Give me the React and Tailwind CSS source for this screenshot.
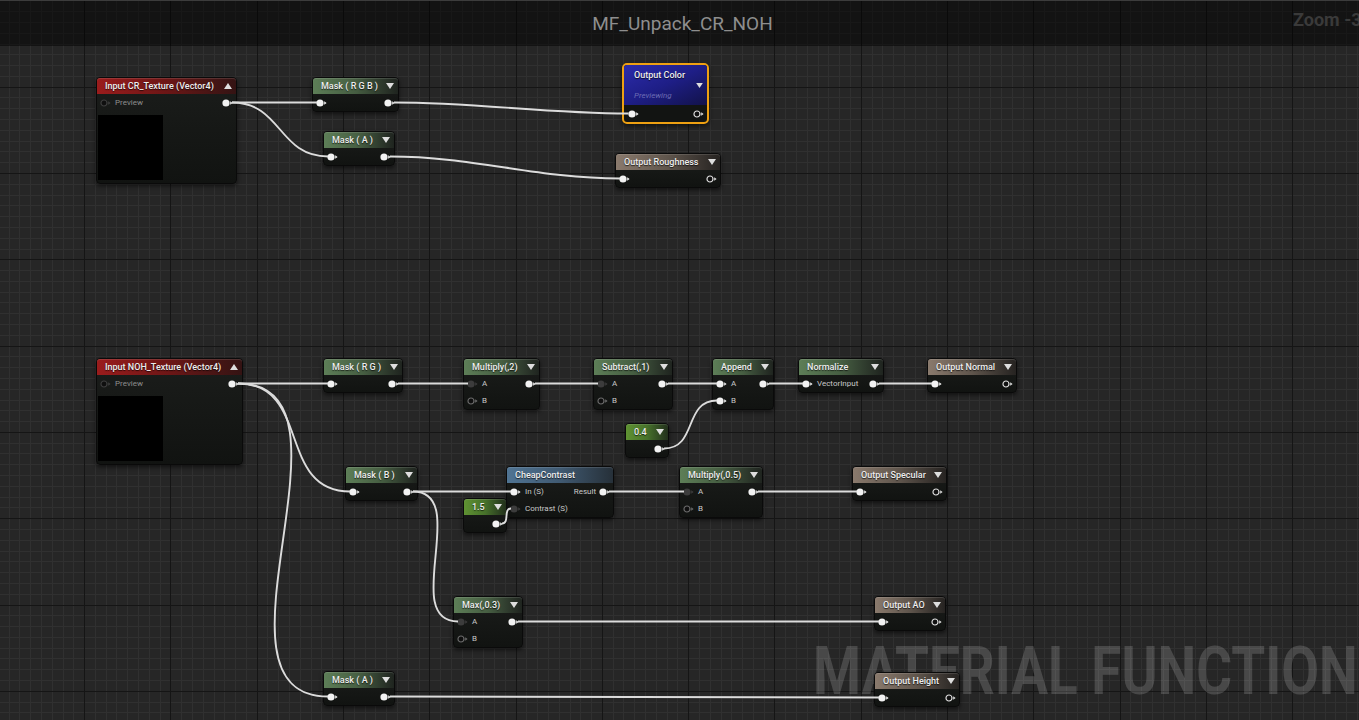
import React from "react";

// graph nodes: numeric x/y/w feed the wire math, pos holds the same values as classes
const NODES = {
  cr: { x: 96, y: 77, w: 141, pos: "left-[96px] top-[77px] w-[141px]", head: "red", title: "Input CR_Texture (Vector4)", tri: "up", preview: true, rows: [{ l: "p", lt: "Preview", r: "w" }] },
  mRGB: { x: 312, y: 77, w: 87, pos: "left-[312px] top-[77px] w-[87px]", head: "green", title: "Mask ( R G B )", rows: [{ l: "w", r: "w" }] },
  mA1: { x: 323, y: 131, w: 72, pos: "left-[323px] top-[131px] w-[72px]", head: "green", title: "Mask ( A )", rows: [{ l: "w", r: "w" }] },
  oR: { x: 615, y: 153, w: 106, pos: "left-[615px] top-[153px] w-[106px]", head: "out", title: "Output Roughness", rows: [{ l: "w", r: "o" }] },
  noh: { x: 96, y: 358, w: 147, pos: "left-[96px] top-[358px] w-[147px]", head: "red", title: "Input NOH_Texture (Vector4)", tri: "up", preview: true, rows: [{ l: "p", lt: "Preview", r: "w" }] },
  mRG: { x: 323, y: 358, w: 80, pos: "left-[323px] top-[358px] w-[80px]", head: "green", title: "Mask ( R G )", rows: [{ l: "w", r: "w" }] },
  mul2: { x: 463, y: 358, w: 77, pos: "left-[463px] top-[358px] w-[77px]", head: "green", title: "Multiply(,2)", rows: [{ l: "g", lt: "A", r: "w" }, { l: "h", lt: "B" }] },
  sub: { x: 593, y: 358, w: 80, pos: "left-[593px] top-[358px] w-[80px]", head: "green", title: "Subtract(,1)", rows: [{ l: "g", lt: "A", r: "w" }, { l: "h", lt: "B" }] },
  app: { x: 712, y: 358, w: 62, pos: "left-[712px] top-[358px] w-[62px]", head: "green", title: "Append", rows: [{ l: "w", lt: "A", r: "w" }, { l: "w", lt: "B" }] },
  c04: { x: 625, y: 423, w: 44, pos: "left-[625px] top-[423px] w-[44px]", head: "const", title: "0.4", rows: [{ r: "w" }] },
  norm: { x: 798, y: 358, w: 86, pos: "left-[798px] top-[358px] w-[86px]", head: "green", title: "Normalize", rows: [{ l: "w", lt: "VectorInput", r: "w" }] },
  oN: { x: 927, y: 358, w: 90, pos: "left-[927px] top-[358px] w-[90px]", head: "out", title: "Output Normal", rows: [{ l: "w", r: "o" }] },
  mB: { x: 345, y: 466, w: 73, pos: "left-[345px] top-[466px] w-[73px]", head: "green", title: "Mask ( B )", rows: [{ l: "w", r: "w" }] },
  cc: { x: 506, y: 466, w: 108, pos: "left-[506px] top-[466px] w-[108px]", head: "blue", title: "CheapContrast", tri: "none", rows: [{ l: "w", lt: "In (S)", rt: "Result", r: "w" }, { l: "g", lt: "Contrast (S)" }] },
  c15: { x: 463, y: 498, w: 44, pos: "left-[463px] top-[498px] w-[44px]", head: "const", title: "1.5", rows: [{ r: "w" }] },
  mul5: { x: 679, y: 466, w: 84, pos: "left-[679px] top-[466px] w-[84px]", head: "green", title: "Multiply(,0.5)", rows: [{ l: "g", lt: "A", r: "w" }, { l: "h", lt: "B" }] },
  oS: { x: 852, y: 466, w: 95, pos: "left-[852px] top-[466px] w-[95px]", head: "out", title: "Output Specular", rows: [{ l: "w", r: "o" }] },
  max: { x: 453, y: 596, w: 70, pos: "left-[453px] top-[596px] w-[70px]", head: "green", title: "Max(,0.3)", rows: [{ l: "g", lt: "A", r: "w" }, { l: "h", lt: "B" }] },
  oAO: { x: 874, y: 596, w: 72, pos: "left-[874px] top-[596px] w-[72px]", head: "out", title: "Output AO", rows: [{ l: "w", r: "o" }] },
  mA2: { x: 323, y: 671, w: 72, pos: "left-[323px] top-[671px] w-[72px]", head: "green", title: "Mask ( A )", rows: [{ l: "w", r: "w" }] },
  oH: { x: 874, y: 672, w: 86, pos: "left-[874px] top-[672px] w-[86px]", head: "out", title: "Output Height", rows: [{ l: "w", r: "o" }] },
};

const HEADS = {
  red: "bg-linear-to-r from-[#9a1c1c] via-[#6c1616] to-[#341313]",
  green: "bg-linear-to-r from-[#5d7e57] via-[#465e42] to-[#1f241f]",
  const: "bg-linear-to-r from-[#5f9232] via-[#47722b] to-[#22301b]",
  out: "bg-linear-to-r from-[#8a7a6d] via-[#5f554c] to-[#262321]",
  blue: "bg-linear-to-r from-[#507493] via-[#405a72] to-[#263039]",
};

const PINS = {
  w: { fill: "#f2f2f2", stroke: "none", tri: "#f2f2f2" },
  g: { fill: "#3c3c3c", stroke: "none", tri: "#3c3c3c" },
  h: { fill: "#0f0f0f", stroke: "#6a6a6a", tri: "#6a6a6a" },
  o: { fill: "#111111", stroke: "#dedede", tri: "#dedede" },
  p: { fill: "#0f0f0f", stroke: "#3e3e3e", tri: "#3e3e3e" },
};

const WIRES = [
  ["cr", 0, "mRGB", 0],
  ["cr", 0, "mA1", 0],
  ["mA1", 0, "oR", 0],
  ["noh", 0, "mRG", 0],
  ["noh", 0, "mB", 0],
  ["noh", 0, "mA2", 0],
  ["mRG", 0, "mul2", 0],
  ["mul2", 0, "sub", 0],
  ["sub", 0, "app", 0],
  ["c04", 0, "app", 1],
  ["app", 0, "norm", 0],
  ["norm", 0, "oN", 0],
  ["mB", 0, "cc", 0],
  ["mB", 0, "max", 0],
  ["c15", 0, "cc", 1],
  ["cc", 0, "mul5", 0],
  ["mul5", 0, "oS", 0],
  ["max", 0, "oAO", 0],
  ["mA2", 0, "oH", 0],
];

const rowY = (n, r) => n.y + 25.5 + 17 * r;

function Pin({ t }) {
  const p = PINS[t];
  const filled = t === "w" || t === "g";
  return (
    <svg width="11" height="8" viewBox="0 0 11 8" className="shrink-0">
      <circle cx="4" cy="4" r={filled ? 3.6 : 3} fill={p.fill} stroke={p.stroke} strokeWidth="1.2" />
      <path d="M8.2 2.3 L10.6 4 L8.2 5.7 Z" fill={p.tri} />
    </svg>
  );
}

function Tri({ up }) {
  return (
    <svg width="8" height="6" viewBox="0 0 8 6" className="shrink-0">
      <polygon points={up ? "0,6 8,6 4,0" : "0,0 8,0 4,6"} fill="#dedede" />
    </svg>
  );
}

function Node({ n }) {
  return (
    <div className={`absolute ${n.pos} rounded-[4px] border border-[#0a0a0a] bg-linear-to-b from-[#1b1d1b] to-[#111311] shadow-[0_2px_4px_rgba(0,0,0,0.55)]`}>
      <div className={`flex h-[16px] items-center justify-between rounded-t-[3px] pl-[8px] pr-[4px] shadow-[inset_0_1px_0_rgba(255,255,255,0.12)] ${HEADS[n.head]}`}>
        <span className="whitespace-nowrap text-[9px] leading-none font-medium text-[#ededed] [text-shadow:0_1px_1px_rgba(0,0,0,0.7)]">
          {n.title}
        </span>
        {n.tri !== "none" && <Tri up={n.tri === "up"} />}
      </div>
      {n.rows.map((r, i) => (
        <div key={i} className="flex h-[17px] items-center justify-between px-[3px]">
          <div className="flex items-center gap-[4px]">
            {r.l && <Pin t={r.l} />}
            {r.lt && (
              <span className={`whitespace-nowrap text-[8px] leading-none ${r.l === "p" ? "text-[#8e8e8e]" : "text-[#c8c8c8]"}`}>{r.lt}</span>
            )}
          </div>
          <div className="flex items-center gap-[3px]">
            {r.rt && <span className="whitespace-nowrap text-[8px] leading-none text-[#c8c8c8]">{r.rt}</span>}
            {r.r && <Pin t={r.r} />}
          </div>
        </div>
      ))}
      {n.preview && <div className="mb-[3px] ml-px mt-[4px] h-[65px] w-[65px] bg-black" />}
    </div>
  );
}

function OutputColor() {
  return (
    <div className="absolute left-[622px] top-[63px] w-[87px] rounded-[5px] border-2 border-[#eea012] bg-[#121412] shadow-[0_2px_4px_rgba(0,0,0,0.55)]">
      <div className="h-[40px] rounded-t-[3px] bg-linear-to-br from-[#2c2cab] via-[#1e1e86] to-[#12124a] pl-[10px] pt-[6px]">
        <span className="block whitespace-nowrap text-[9px] leading-none font-medium text-[#ededed] [text-shadow:0_1px_1px_rgba(0,0,0,0.7)]">
          Output Color
        </span>
        <div className="flex justify-end pr-[4px] pt-[3px]">
          <svg width="7" height="5" viewBox="0 0 8 6" className="shrink-0">
            <polygon points="0,0 8,0 4,6" fill="#dedede" />
          </svg>
        </div>
        <span className="mt-[4px] block text-[8px] italic leading-none text-[#6c6cb4]">Previewing</span>
      </div>
      <div className="flex h-[17px] items-center justify-between pl-[4px] pr-[3px]">
        <Pin t="w" />
        <Pin t="o" />
      </div>
    </div>
  );
}

function Grid() {
  const step = 10.7875;
  const lines = [];
  for (let k = 0; k < 130; k++) {
    const x = Math.round(-2.2 + k * step) + 0.5;
    if (x > 1359) break;
    lines.push({ k: "v" + k, x1: x, y1: 0, x2: x, y2: 720, major: k % 8 === 0 });
  }
  for (let k = 0; k < 70; k++) {
    const y = Math.round(0.4 + k * step) + 0.5;
    if (y > 720) break;
    lines.push({ k: "h" + k, x1: 0, y1: y, x2: 1359, y2: y, major: k % 8 === 0 });
  }
  const minor = lines.filter((l) => !l.major);
  const major = lines.filter((l) => l.major);
  return (
    <svg className="absolute inset-0" width="1359" height="720">
      {minor.map((l) => (
        <line key={l.k} x1={l.x1} y1={l.y1} x2={l.x2} y2={l.y2} stroke="#303030" strokeWidth="1" />
      ))}
      {major.map((l) => (
        <line key={l.k} x1={l.x1} y1={l.y1} x2={l.x2} y2={l.y2} stroke="#151515" strokeWidth="1" />
      ))}
    </svg>
  );
}

function wirePath(x1, y1, x2, y2) {
  const c = (Math.abs(x2 - x1) + Math.abs(y2 - y1)) / 3;
  return `M${x1} ${y1} C${x1 + c} ${y1} ${x2 - c} ${y2} ${x2} ${y2}`;
}

function Wires() {
  const paths = WIRES.map(([a, ra, b, rb]) => {
    const s = NODES[a];
    const e = NODES[b];
    return wirePath(s.x + s.w - 5, rowY(s, ra), e.x + 5, rowY(e, rb));
  });
  // Mask RGB feeds the selected Output Color node, which has a taller header
  const m = NODES.mRGB;
  paths.push(wirePath(m.x + m.w - 5, rowY(m, 0), 628.5, 113.5));
  return (
    <svg className="pointer-events-none absolute inset-0" width="1359" height="720">
      {paths.map((d, i) => (
        <path key={i} d={d} fill="none" stroke="#dcdcdc" strokeWidth="1.9" />
      ))}
    </svg>
  );
}

export default function App() {
  return (
    <div className="relative h-[720px] w-[1359px] overflow-hidden bg-[#262626] font-[family-name:Roboto,sans-serif]">
      <Grid />

      <div className="absolute left-[813px] top-[639px] origin-left scale-x-[0.83] whitespace-nowrap text-[66px] font-bold leading-none text-white/[0.16]">
        MATERIAL FUNCTION
      </div>

      {Object.entries(NODES).map(([k, n]) => (
        <Node key={k} n={n} />
      ))}
      <OutputColor />
      <Wires />

      <div className="absolute inset-x-0 top-0 flex h-[46px] items-center justify-center border-t border-[#3c3c3c] bg-black/50 pl-[6px]">
        <span className="text-[19px] leading-none text-[#8e8e8e]">MF_Unpack_CR_NOH</span>
        <span className="absolute left-[1293px] top-[10px] whitespace-nowrap text-[18px] font-bold leading-none text-[#3a3a3a]">
          Zoom -3
        </span>
      </div>
    </div>
  );
}
